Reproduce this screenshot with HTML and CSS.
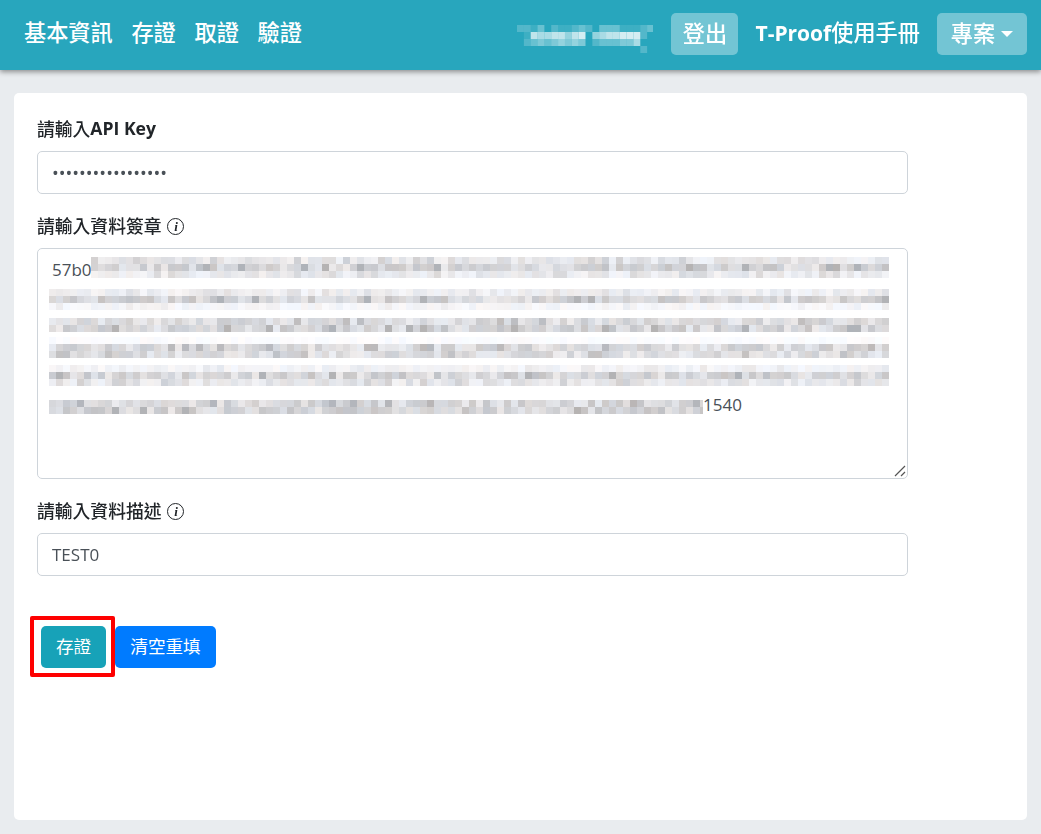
FILE: index.html
```html
<!DOCTYPE html>
<html lang="zh-Hant">
<head>
<meta charset="utf-8">
<title>存證</title>
<link rel="stylesheet" href="styles.css">
</head>
<body>
<nav class="navbar">
  <div class="nav-left">
    <a class="nav-link">基本資訊</a>
    <a class="nav-link">存證</a>
    <a class="nav-link">取證</a>
    <a class="nav-link">驗證</a>
  </div>
  <div class="nav-right">
    <canvas class="name-mosaic" width="136" height="28"></canvas>
    <a class="nav-btn logout">登出</a>
    <a class="nav-link manual"><span class="latin">T-Proof</span>使用手冊</a>
    <a class="nav-btn project">專案<i class="caret"></i></a>
  </div>
</nav>
<main class="card">
  <form class="form">
    <div class="group">
      <label class="label"><span>請輸入</span><b class="label-latin">API Key</b></label>
      <input class="control secret" type="password" value="abcdefghijklmnopq">
    </div>
    <div class="group">
      <label class="label"><span>請輸入資料簽章</span><i class="info">i</i></label>
      <div class="control area">
        <div class="line"><span class="chunk">57b0</span><canvas class="mosaic m1" width="798" height="21" data-rows=".6,1,.5"></canvas></div>
        <div class="line"><canvas class="mosaic m2" width="840" height="21" data-rows=".4,1,.25"></canvas></div>
        <div class="line"><canvas class="mosaic m3" width="840" height="14" data-rows=".85,1"></canvas></div>
        <div class="line"><canvas class="mosaic m4" width="840" height="21" data-rows=".08,.9,.8"></canvas></div>
        <div class="line"><canvas class="mosaic m5" width="840" height="21" data-rows=".3,1,.6"></canvas></div>
        <div class="line"><canvas class="mosaic m6" width="654" height="14" data-rows=".95,1"></canvas><span class="chunk">1540</span></div>
        <svg class="grip" width="12" height="12" viewBox="0 0 12 12"><path d="M1 11 11 1M7 11l4-4" stroke="#555" stroke-width="1.2" fill="none"/></svg>
      </div>
    </div>
    <div class="group">
      <label class="label"><span>請輸入資料描述</span><i class="info">i</i></label>
      <input class="control" type="text" value="TEST0">
    </div>
    <div class="actions">
      <button class="btn btn-info" type="button">存證</button>
      <button class="btn btn-primary" type="button">清空重填</button>
      <span class="highlight"></span>
    </div>
  </form>
</main>
<script src="mosaic.js"></script>
</body>
</html>
```

FILE: styles.css
```css
* { box-sizing: border-box; }
html, body { height: 100%; }
body {
  margin: 0;
  display: flex;
  flex-direction: column;
  background: #e9ecef;
  color: #212529;
  font-family: "Open Sans", "Noto Sans CJK TC", sans-serif;
  font-size: 17.6px;
}
.navbar {
  height: 70px;
  flex: none;
  display: flex;
  justify-content: space-between;
  align-items: center;
  padding: 0 14px 2px 24px;
  background: #28a6bd;
  box-shadow: 0 2px 5px rgba(0, 0, 0, .4);
  color: #fff;
}
.nav-left, .nav-right { display: flex; align-items: center; }
.nav-left { gap: 18.7px; }
.nav-link {
  font-size: 22.2px;
  font-weight: 500;
  line-height: 42px;
  padding-bottom: 3px;
  white-space: nowrap;
}
.latin { font-size: 21px; font-weight: 700; }
.name-mosaic { display: block; margin: 10px 18px 0 0; }
.nav-btn {
  height: 42px;
  padding-bottom: 3px;
  display: flex;
  align-items: center;
  justify-content: center;
  border-radius: 5px;
  background: rgba(255, 255, 255, .35);
  font-size: 22.2px;
  font-weight: 500;
}
.logout { width: 67px; }
.manual { margin: 0 17px; }
.project { width: 90px; }
.caret {
  margin: 3px 0 0 6px;
  border-top: 6px solid #fff;
  border-left: 6px solid transparent;
  border-right: 6px solid transparent;
}
.card {
  flex: 1;
  margin: 23px 14px 14px;
  padding: 23px;
  background: #fff;
  border-radius: 5px;
}
.form { width: 871px; }
.group { margin-bottom: 19px; }
.label {
  display: flex;
  align-items: center;
  height: 35px;
  padding-bottom: 11px;
  font-size: 17.8px;
  font-weight: 500;
}
.label-latin { font-size: 17.6px; font-weight: 700; }
.info {
  width: 17px;
  height: 17px;
  margin: 2px 0 0 6px;
  border: 1.2px solid #212529;
  border-radius: 50%;
  display: flex;
  align-items: center;
  justify-content: center;
  font: italic 700 13px/1 "Liberation Serif", serif;
}
.control {
  display: block;
  width: 100%;
  height: 43px;
  padding: 6px 14px;
  border: 1px solid #ced4da;
  border-radius: 5px;
  background: #fff;
  color: #495057;
  font-family: inherit;
  font-size: 17px;
}
.secret { font-size: 18px; }
.area {
  position: relative;
  height: 231px;
  padding: 8px 14px;
}
.line { display: flex; align-items: center; height: 27px; }
.chunk { padding-bottom: 2px; }
.mosaic { display: block; flex: none; }
.m1 { margin: -6px 0 0 -1px; }
.m2, .m3, .m4, .m5, .m6 { margin-left: -3px; }
.m2 { margin-top: 3px; }
.m4 { margin-top: -8px; }
.m5 { margin-top: -6px; }
.m6 { margin-top: 2px; }
.grip { position: absolute; right: 1px; bottom: 1px; }
.actions {
  position: relative;
  display: flex;
  align-items: center;
  gap: 9px;
  margin-top: 50px;
  padding-left: 4px;
}
.btn {
  height: 42px;
  padding: 0 0 3px;
  border: 0;
  border-radius: 5px;
  color: #fff;
  font-family: inherit;
  font-size: 17.6px;
}
.btn-info { width: 65px; background: #17a2b8; }
.btn-primary { width: 101px; background: #007bff; }
.highlight {
  position: absolute;
  left: -7px;
  top: -10px;
  width: 85px;
  height: 61px;
  border: 4.5px solid #fe0000;
  border-radius: 2px;
  pointer-events: none;
}
```

FILE: mosaic.js
```js
// Draws the pixelated (redacted) areas of the screenshot.
var seed = 7;
function rnd() {
  seed = (seed * 16807) % 2147483647;
  return seed / 2147483647;
}
var CELL = 7;
document.querySelectorAll('.mosaic').forEach(function (canvas) {
  var ctx = canvas.getContext('2d');
  var rows = canvas.dataset.rows.split(',').map(Number);
  rows.forEach(function (strength, r) {
    for (var x = 0; x < canvas.width; x += CELL) {
      var dark = rnd() < 0.08 ? 0.30 : 0.08 + rnd() * 0.16;
      var a = dark * strength;
      var tint = rnd() * 8 - 4;
      var g = 255 - a * 255;
      ctx.fillStyle = 'rgb(' + (g + tint) + ',' + g + ',' + (g - tint + 3) + ')';
      ctx.fillRect(x, r * CELL, CELL, CELL);
    }
  });
});

var nameCanvas = document.querySelector('.name-mosaic');
var nameCtx = nameCanvas.getContext('2d');
[
  '22130211232033311123',
  '01766775780567788820',
  '02343454540233344600',
  '00000000000000000020'
].forEach(function (row, r) {
  row.split('').forEach(function (v, c) {
    nameCtx.fillStyle = 'rgba(255,255,255,' + Number(v) / 10 + ')';
    nameCtx.fillRect(c * 6.85, r * CELL, 6.85, CELL);
  });
});
```
